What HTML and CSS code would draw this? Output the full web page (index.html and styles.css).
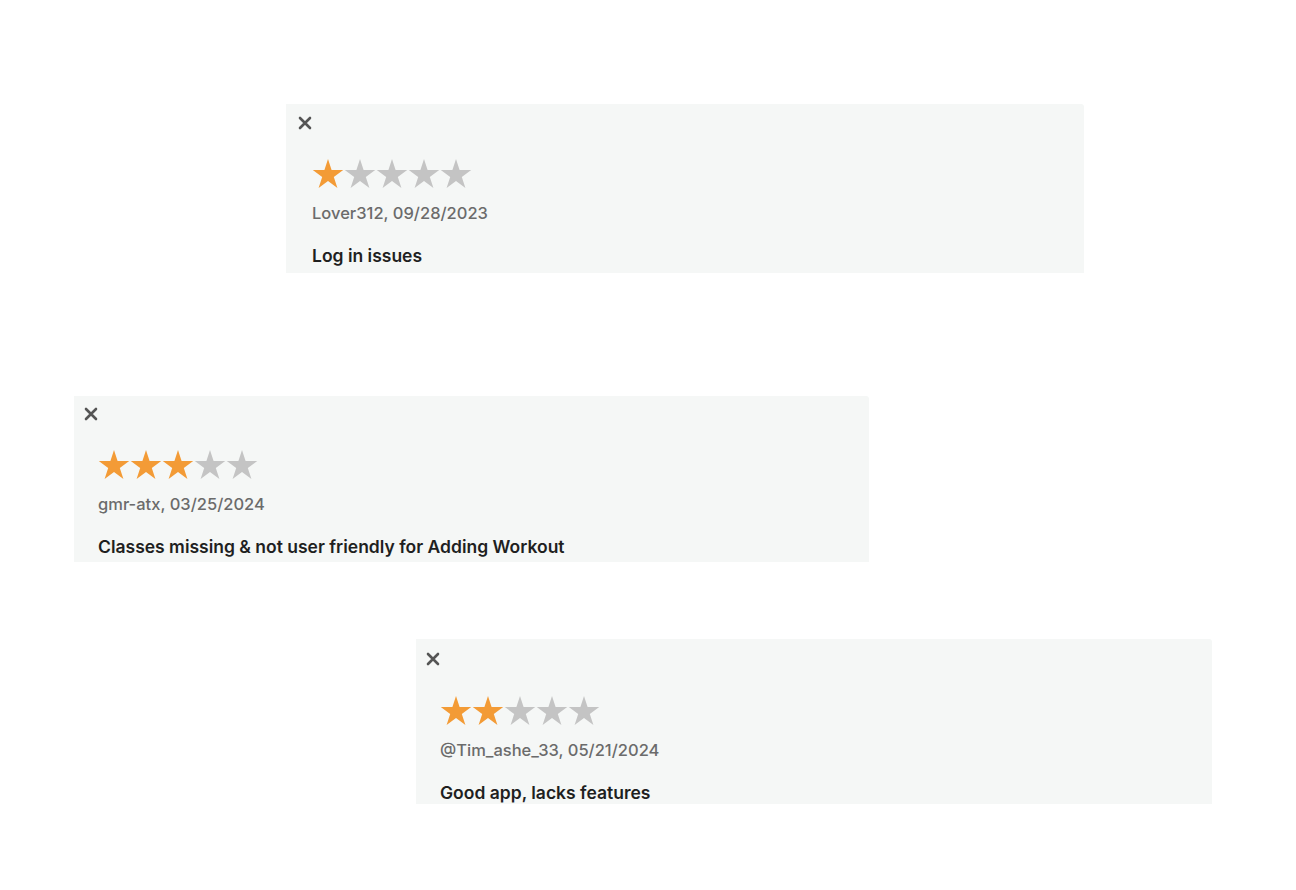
FILE: index.html
```html
<!DOCTYPE html>
<html lang="en">
<head>
    <meta charset="UTF-8">
    <meta name="viewport" content="width=device-width, initial-scale=1.0">
    <title>Reviews</title>
    <link rel="stylesheet" href="styles.css">
</head>
<body>
    <svg class="defs" width="0" height="0">
        <symbol id="star" viewBox="0 0 32 32">
            <polygon points="16,1 19.59,12.06 31.22,12.06 21.81,18.89 25.41,29.94 16,23.11 6.6,29.94 10.19,18.89 0.78,12.06 12.41,12.06"/>
        </symbol>
        <symbol id="close" viewBox="0 0 14 14">
            <path d="M2 2L12 12M12 2L2 12" stroke-width="2.6" stroke-linecap="round"/>
        </symbol>
    </svg>

    <div class="card card-first">
        <button class="close"><svg><use href="#close"/></svg></button>
        <div class="stars">
            <svg class="on"><use href="#star"/></svg>
            <svg><use href="#star"/></svg>
            <svg><use href="#star"/></svg>
            <svg><use href="#star"/></svg>
            <svg><use href="#star"/></svg>
        </div>
        <p class="meta">Lover312, 09/28/2023</p>
        <h3 class="title">Log in issues</h3>
    </div>

    <div class="card card-second">
        <button class="close"><svg><use href="#close"/></svg></button>
        <div class="stars">
            <svg class="on"><use href="#star"/></svg>
            <svg class="on"><use href="#star"/></svg>
            <svg class="on"><use href="#star"/></svg>
            <svg><use href="#star"/></svg>
            <svg><use href="#star"/></svg>
        </div>
        <p class="meta">gmr-atx, 03/25/2024</p>
        <h3 class="title">Classes missing &amp; not user friendly for Adding Workout</h3>
    </div>

    <div class="card card-third">
        <button class="close"><svg><use href="#close"/></svg></button>
        <div class="stars">
            <svg class="on"><use href="#star"/></svg>
            <svg class="on"><use href="#star"/></svg>
            <svg><use href="#star"/></svg>
            <svg><use href="#star"/></svg>
            <svg><use href="#star"/></svg>
        </div>
        <p class="meta">@Tim_ashe_33, 05/21/2024</p>
        <h3 class="title">Good app, lacks features</h3>
    </div>
</body>
</html>
```

FILE: styles.css
```css
body {
    margin: 0;
    padding-top: 104px;
    background: #ffffff;
    font-family: Inter, "Noto Sans", sans-serif;
}
.defs {
    position: absolute;
}
.card {
    width: 798px;
    box-sizing: border-box;
    padding: 12px 26px 6px;
    background: #f5f7f6;
    border-top-right-radius: 3px;
}
.card-first {
    margin-left: 286px;
}
.card-second {
    width: 795px;
    margin-top: 123px;
    margin-left: 74px;
    padding: 11px 24px 4px;
}
.card-third {
    width: 796px;
    margin-top: 77px;
    margin-left: 416px;
    padding: 13px 24px 0;
}
.card-third .stars {
    margin-top: 29px;
}
.close {
    display: block;
    width: 14px;
    height: 14px;
    margin-left: -14px;
    padding: 0;
    border: none;
    background: none;
    cursor: pointer;
}
.close svg {
    display: block;
    width: 14px;
    height: 14px;
    stroke: #555555;
}
.stars {
    display: flex;
    margin-top: 28px;
}
.stars svg {
    width: 32px;
    height: 32px;
    fill: #c4c4c4;
}
.stars svg.on {
    fill: #f39b36;
}
.meta {
    margin: 13px 0 0;
    font-size: 16.5px;
    line-height: 20px;
    font-weight: 500;
    color: #6b6b6b;
}
.title {
    margin: 22px 0 0;
    font-size: 17.5px;
    line-height: 22px;
    font-weight: 600;
    color: #1f1f1f;
}
```
